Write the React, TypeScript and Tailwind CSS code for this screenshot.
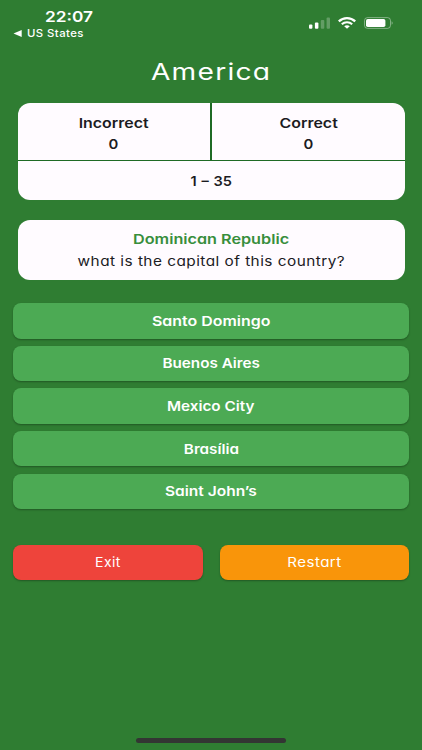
import type { ReactNode } from 'react';
import clsx from 'clsx';

const ANSWERS = [
    { name: 'Santo Domingo', fit: 'scale-x-[1.18]' },
    { name: 'Buenos Aires', fit: 'scale-x-[1.13]' },
    { name: 'Mexico City', fit: 'scale-x-[1.13]' },
    { name: 'Brasília', fit: 'scale-x-[1.13]' },
    { name: 'Saint John’s', fit: 'scale-x-[1.15]' },
];

// Wide lettering: regular glyphs stretched sideways
const Wide = ({ className, children }: { className?: string; children: ReactNode }) => (
    <span className={clsx('inline-block whitespace-nowrap', className)}>{children}</span>
);

const StatusBar = () => (
    <header className="flex h-[50px] shrink-0 justify-between pl-[13px] pr-[29px]">
        <div className="flex flex-col pt-[8px]">
            <div className="pl-[32px] text-[15px] font-semibold leading-[17px]">
                <Wide className="origin-left scale-x-[1.15]">22:07</Wide>
            </div>
            <div className="flex items-center gap-[5px] text-[10.5px] font-medium leading-[17px]">
                <svg width="9" height="7" viewBox="0 0 9 7" fill="currentColor">
                    <path d="M0.5 3.5 8.7 0v7z" />
                </svg>
                <Wide className="origin-left scale-x-[1.08] tracking-[0.4px] [font-feature-settings:normal]">US States</Wide>
            </div>
        </div>
        <div className="mt-[17px] flex h-[12px] items-center gap-[8px]">
            <svg width="21" height="12" viewBox="0 0 21 12" fill="currentColor">
                <rect x="0" y="7.6" width="3.4" height="4.2" rx="1" />
                <rect x="5.9" y="5.4" width="3.5" height="6.4" rx="1" />
                <rect x="11.8" y="3" width="3.5" height="8.8" rx="1" opacity="0.25" />
                <rect x="17.6" y="0.6" width="3.4" height="11.2" rx="1" opacity="0.25" />
            </svg>
            <svg width="18" height="12" viewBox="0 0 18 12" fill="none" stroke="currentColor">
                <path d="M0.8 4.4C5.4 0.1 12.6 0.1 17.2 4.4" strokeWidth="2.3" />
                <path d="M3.8 7.3c2.9-2.7 7.5-2.7 10.4 0" strokeWidth="2.1" />
                <path d="M9 11.8 6.2 9.3c1.5-1.4 4.1-1.4 5.6 0z" fill="currentColor" stroke="none" />
            </svg>
            <svg width="29" height="12" viewBox="0 0 29 12">
                <rect x="0.5" y="0.6" width="26" height="10.8" rx="3" fill="none" stroke="currentColor" opacity="0.4" />
                <rect x="2" y="2" width="19.4" height="8" rx="1.8" fill="currentColor" />
                <path d="M27.7 4.2c1.2 0.6 1.2 3 0 3.6z" fill="currentColor" opacity="0.5" />
            </svg>
        </div>
    </header>
);

const Score = ({ label, value }: { label: string; value: number }) => (
    <div className="flex flex-col items-center bg-[#fffbff] pt-[10px] text-[13.5px] font-semibold leading-[21px]">
        <Wide className="scale-x-[1.18]">{label}</Wide>
        <Wide className="scale-x-[1.1]">{value}</Wide>
    </div>
);

export default function App() {
    return (
        <div className="flex h-[750px] w-[422px] flex-col overflow-hidden bg-[#2f7d32] font-['Inter',sans-serif] text-white [font-feature-settings:'cv11']">
            <StatusBar />

            <h1 className="flex h-[53px] shrink-0 justify-center text-[22.5px] leading-[43px]">
                <Wide className="scale-x-[1.25] tracking-[1px]">America</Wide>
            </h1>

            <main className="flex flex-col">
                <section className="mx-[17.5px] grid h-[97px] grid-cols-2 grid-rows-[57px_39px] gap-x-[2px] gap-y-px overflow-hidden rounded-[12px] bg-[#1f6a25] text-[#1c1b1f]">
                    <Score label="Incorrect" value={0} />
                    <Score label="Correct" value={0} />
                    <div className="col-span-2 flex items-center justify-center bg-[#fffbff] pt-px text-[13.5px] font-semibold">
                        <Wide className="scale-x-[1.08] [word-spacing:1px]">1 – 35</Wide>
                    </div>
                </section>

                <section className="mx-[17.5px] mt-[20px] flex h-[60px] flex-col items-center rounded-[12px] bg-[#fffbff] pt-[9px] text-[13.5px] leading-[21.5px] text-[#1c1b1f]">
                    <Wide className="scale-x-[1.2] font-semibold text-[#388e3c]">Dominican Republic</Wide>
                    <Wide className="scale-x-[1.14] tracking-[0.4px]">what is the capital of this country?</Wide>
                </section>

                <div className="mt-[23px] flex flex-col gap-[7.15px] px-[13px]">
                    {ANSWERS.map(({ name, fit }) => (
                        <button
                            key={name}
                            className="flex h-[35.5px] items-center justify-center rounded-[8px] bg-[#4caa54] text-[13.5px] font-semibold shadow-[0_1px_2px_rgba(0,0,0,0.3)]"
                        >
                            <Wide className={fit}>{name}</Wide>
                        </button>
                    ))}
                </div>

                <div className="mt-[35.5px] grid grid-cols-2 gap-[17px] px-[13px] text-[13px]">
                    <button className="h-[35.5px] rounded-[8px] bg-[#ee443b] shadow-[0_1px_2px_rgba(0,0,0,0.3)]">
                        <Wide className="scale-x-[1.08] tracking-[0.4px]">Exit</Wide>
                    </button>
                    <button className="h-[35.5px] rounded-[8px] bg-[#f9950a] shadow-[0_1px_2px_rgba(0,0,0,0.3)]">
                        <Wide className="scale-x-[1.16] tracking-[0.4px]">Restart</Wide>
                    </button>
                </div>
            </main>

            <div className="mx-auto mb-[7.5px] mt-auto h-[4.5px] w-[150px] rounded-full bg-[#333533]" />
        </div>
    );
}
